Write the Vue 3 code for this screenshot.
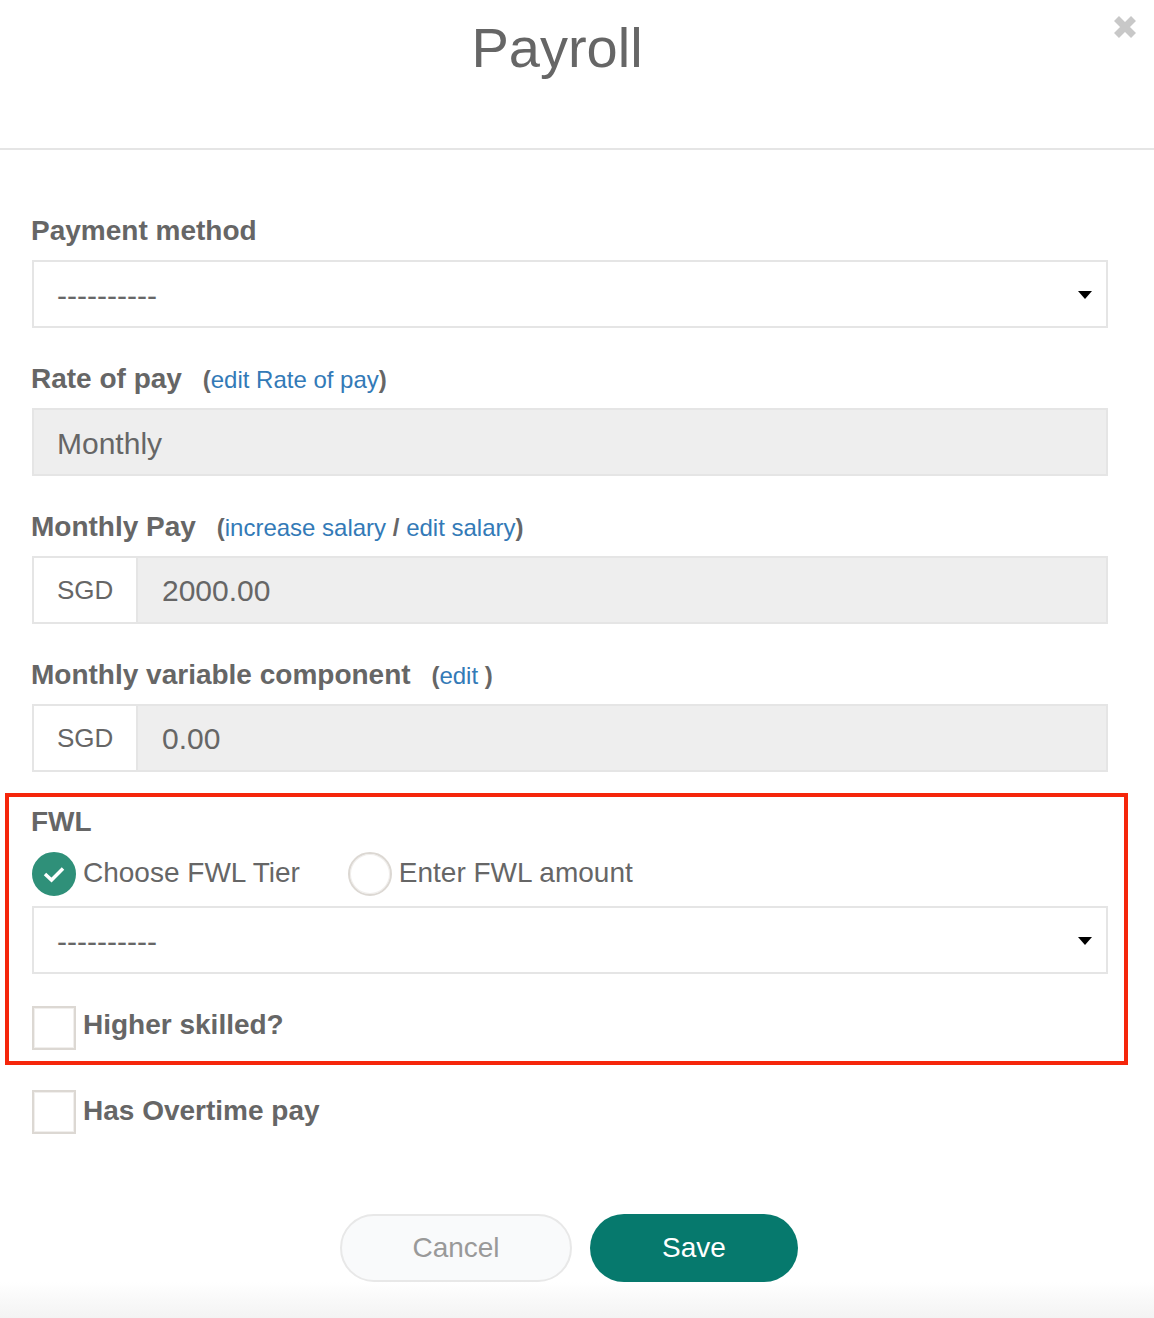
<script setup>
const selectOptions = ['----------'];
</script>

<template>
  <div class="modal">
    <header class="modal-head">
      <h1 class="title">Payroll</h1>
      <button class="close" aria-label="Close">
        <svg width="24" height="24" viewBox="0 0 24 24">
          <path d="M3.5 3.5 L20.5 20.5 M20.5 3.5 L3.5 20.5" stroke="#c8c8c8" stroke-width="7" fill="none" />
        </svg>
      </button>
    </header>

    <div class="modal-body">
      <div class="field first">
        <label class="label">Payment method</label>
        <div class="select">
          <span class="dashes">{{ selectOptions[0] }}</span>
          <svg class="caret" width="14" height="8" viewBox="0 0 14 8"><path d="M0 0 H14 L7 8 Z" fill="#000" /></svg>
        </div>
      </div>

      <div class="field">
        <label class="label">Rate of pay <span class="note">(<a class="link">edit Rate of pay</a>)</span></label>
        <div class="input disabled">Monthly</div>
      </div>

      <div class="field">
        <label class="label">Monthly Pay <span class="note">(<a class="link">increase salary</a> / <a class="link">edit salary</a>)</span></label>
        <div class="group">
          <span class="addon">SGD</span>
          <div class="input disabled grow">2000.00</div>
        </div>
      </div>

      <div class="field">
        <label class="label">Monthly variable component <span class="note">(<a class="link">edit</a> )</span></label>
        <div class="group">
          <span class="addon">SGD</span>
          <div class="input disabled grow">0.00</div>
        </div>
      </div>

      <section class="highlight">
        <label class="label">FWL</label>
        <div class="radios">
          <span class="option">
            <span class="radio checked">
              <svg width="24" height="18" viewBox="0 0 24 18"><path d="M3 9 L9.5 15 L21 3.5" stroke="#fff" stroke-width="3.5" fill="none" /></svg>
            </span>
            <span class="option-text">Choose FWL Tier</span>
          </span>
          <span class="option">
            <span class="radio"></span>
            <span class="option-text">Enter FWL amount</span>
          </span>
        </div>
        <div class="select fwl-select">
          <span class="dashes">{{ selectOptions[0] }}</span>
          <svg class="caret" width="14" height="8" viewBox="0 0 14 8"><path d="M0 0 H14 L7 8 Z" fill="#000" /></svg>
        </div>
        <div class="check skilled">
          <span class="box"></span>
          <span class="check-text">Higher skilled?</span>
        </div>
      </section>

      <div class="check">
        <span class="box"></span>
        <span class="check-text">Has Overtime pay</span>
      </div>

      <div class="actions">
        <button class="btn cancel">Cancel</button>
        <button class="btn save">Save</button>
      </div>
    </div>

    <div class="foot-shade"></div>
  </div>
</template>

<style>
html, body { margin: 0; background: #fff; }
</style>

<style scoped>
.modal {
  position: relative;
  width: 1154px;
  height: 1318px;
  overflow: hidden;
  background: #fff;
  color: #666;
  font-family: "Liberation Sans", Arial, sans-serif;
  font-size: 28px;
}

.modal-head {
  height: 148px;
  border-bottom: 2px solid #e5e5e5;
  position: relative;
}

.title {
  margin: 0;
  padding: 16px 40px 0 0;
  text-align: center;
  font-size: 56px;
  line-height: 64px;
  font-weight: 400;
  color: #666;
}

.close {
  position: absolute;
  top: 15px;
  right: 17px;
  width: 24px;
  height: 24px;
  padding: 0;
  border: 0;
  background: none;
}

.modal-body {
  position: relative;
  z-index: 1;
  padding: 0 46px 0 31px;
}

.field {
  margin-bottom: 31px;
}

.field.first {
  padding-top: 61px;
}

.label {
  display: block;
  height: 40px;
  line-height: 40px;
  font-weight: 700;
  color: #666;
  margin-bottom: 9px;
}

.note {
  margin-left: 13px;
  font-size: 24px;
  font-weight: 700;
  color: #666;
}

.link {
  font-weight: 400;
  color: #337ab7;
}

.select,
.input {
  box-sizing: border-box;
  height: 68px;
  margin-left: 1px;
  border: 2px solid #e5e5e5;
  padding: 3px 23px 0;
  display: flex;
  align-items: center;
  font-size: 30px;
}

.select {
  justify-content: space-between;
  background: #fff;
  padding: 0 14px 0 23px;
}

.dashes {
  padding-top: 4px;
}

.caret {
  margin-top: 1px;
}

.disabled {
  background: #eee;
}

.group {
  display: flex;
  margin-left: 1px;
}

.group .input {
  margin-left: 0;
  padding: 2px 24px 0;
}

.addon {
  box-sizing: border-box;
  width: 104px;
  height: 68px;
  border: 2px solid #e5e5e5;
  border-right: 0;
  padding: 1px 0 0 23px;
  display: flex;
  align-items: center;
  font-size: 26px;
  background: #fff;
}

.grow {
  flex: 1;
}

.highlight {
  margin: -10px -20px 25px -26px;
  border: 4px solid #f5260b;
  padding: 5px 16px 11px 22px;
}

.highlight .label {
  margin-bottom: 10px;
}

.radios {
  display: flex;
  gap: 48px;
  height: 44px;
  margin-left: 1px;
}

.option {
  display: flex;
  align-items: center;
  gap: 7px;
}

.option-text {
  padding-bottom: 2px;
}

.radio {
  box-sizing: border-box;
  width: 44px;
  height: 44px;
  border-radius: 50%;
  border: 2px solid #dcd8d3;
  box-shadow: inset 0 0 0 1px #f1efed;
  display: flex;
  align-items: center;
  justify-content: center;
}

.radio.checked {
  background: #2f9079;
  border-color: #2f9079;
  box-shadow: none;
}

.fwl-select {
  margin-top: 10px;
}

.check {
  display: flex;
  align-items: center;
  gap: 7px;
  height: 44px;
  margin-left: 1px;
}

.check-text {
  font-weight: 700;
  padding-bottom: 2px;
}

.skilled {
  margin-top: 32px;
}

.skilled .check-text {
  padding-bottom: 6px;
}

.box {
  box-sizing: border-box;
  width: 44px;
  height: 44px;
  border: 2px solid #dcd8d3;
  box-shadow: inset 0 0 0 1px #f1efed;
  background: #fff;
}

.actions {
  display: flex;
  gap: 18px;
  margin-top: 80px;
  padding-left: 309px;
}

.btn {
  box-sizing: border-box;
  height: 68px;
  border-radius: 34px;
  font-family: inherit;
  font-size: 28px;
  padding: 0;
}

.cancel {
  width: 232px;
  background: #f9fafb;
  border: 2px solid #e8e8e8;
  color: #999;
}

.save {
  width: 208px;
  background: #06796d;
  border: 0;
  color: #fff;
}

.foot-shade {
  position: absolute;
  left: 0;
  right: 0;
  bottom: 0;
  height: 36px;
  background: linear-gradient(to bottom, #ffffff, #f3f3f3);
}
</style>
